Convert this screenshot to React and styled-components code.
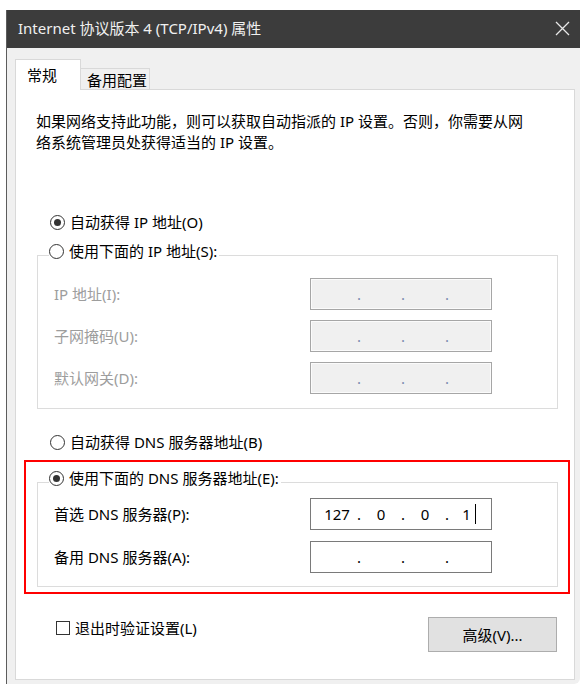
import React from 'react';
import styled, { createGlobalStyle } from 'styled-components';

const GlobalStyle = createGlobalStyle`
  html, body {
    margin: 0;
    padding: 0;
    background: #ffffff;
  }
  body {
    font-family: "Noto Sans", "Noto Sans CJK SC", sans-serif;
    font-size: 15px;
    color: #000;
  }
`;

const Window = styled.div`
  margin: 10px 0 0 6px;
  width: 574px;
  height: 674px;
  display: flex;
  flex-direction: column;
  background: #f0f0f0;
  border-left: 1px solid #5c5c5c;
  border-bottom-right-radius: 6px;
  box-sizing: border-box;
  overflow: hidden;
`;

const TitleBar = styled.div`
  height: 38px;
  flex: 0 0 38px;
  background: #3c3c3c;
  color: #f0f0f0;
  display: flex;
  align-items: center;
  justify-content: space-between;
  padding: 0 6px 2px 11px;
  box-sizing: border-box;
  font-size: 15px;
  line-height: 20px;
`;

const CloseButton = styled.div`
  width: 24px;
  height: 24px;
  display: flex;
  align-items: center;
  justify-content: center;
`;

const Body = styled.div`
  flex: 1;
  display: flex;
  flex-direction: column;
  padding: 12px 5px 4px 8px;
  min-height: 0;
`;

const TabBar = styled.div`
  display: flex;
  align-items: flex-end;
  height: 30px;
  position: relative;
  z-index: 1;
  margin-bottom: -1px;
`;

const Tab = styled.div`
  box-sizing: border-box;
  height: ${(p) => (p.$active ? '31px' : '22px')};
  padding: ${(p) => (p.$active ? '5px 0 0 11px' : '1px 0 0 6px')};
  width: ${(p) => p.$width}px;
  background: ${(p) => (p.$active ? '#ffffff' : '#f0f0f0')};
  border: 1px solid #d9d9d9;
  border-bottom: ${(p) => (p.$active ? 'none' : '1px solid #d9d9d9')};
  border-left: ${(p) => (p.$active ? '1px solid #d9d9d9' : 'none')};
  line-height: 20px;
`;

const Panel = styled.div`
  flex: 1;
  background: #ffffff;
  border: 1px solid #d9d9d9;
  display: flex;
  flex-direction: column;
`;

const Description = styled.p`
  margin: 21px 0 0 20px;
  line-height: 21px;
  width: 500px;
`;

const RadioRow = styled.label`
  display: flex;
  align-items: center;
  height: 20px;
  line-height: 20px;
  gap: 5px;
  margin: ${(p) => p.$margin || '0'};
  color: ${(p) => (p.$disabled ? '#9d9d9d' : '#000')};
  white-space: nowrap;
`;

const RadioCircle = styled.span`
  width: 15px;
  height: 15px;
  box-sizing: border-box;
  border: 1px solid #333333;
  border-radius: 50%;
  background: #ffffff;
  display: flex;
  align-items: center;
  justify-content: center;
  flex: 0 0 15px;

  &::after {
    content: '';
    width: 7px;
    height: 7px;
    border-radius: 50%;
    background: ${(p) => (p.$checked ? '#333333' : 'transparent')};
  }
`;

const CheckBox = styled.span`
  width: 14px;
  height: 14px;
  box-sizing: border-box;
  border: 1px solid #333333;
  background: #ffffff;
  flex: 0 0 14px;
`;

const Group = styled.fieldset`
  margin: ${(p) => p.$margin || '0'};
  padding: 0 0 ${(p) => p.$bottom}px 0;
  border: 1px solid #dcdcdc;
  min-width: 0;
`;

const Legend = styled.legend`
  margin-left: 11px;
  padding: 0 2px 8px 0;
  background: #ffffff;
`;

const Rows = styled.div`
  display: flex;
  flex-direction: column;
  gap: ${(p) => p.$gap}px;
  padding-top: ${(p) => p.$top}px;
`;

const FieldRow = styled.div`
  display: flex;
  align-items: center;
  height: 32px;
  padding-left: 16px;
`;

const FieldLabel = styled.span`
  flex: 0 0 256px;
  line-height: 20px;
  color: ${(p) => (p.$disabled ? '#9d9d9d' : '#000')};
`;

const IpBox = styled.div`
  width: 182px;
  height: 32px;
  box-sizing: border-box;
  display: flex;
  align-items: center;
  padding-left: 7px;
  background: ${(p) => (p.$disabled ? '#f0f0f0' : '#ffffff')};
  border: 1px solid ${(p) => (p.$disabled ? '#a6a6a6' : '#7a7a7a')};
  box-shadow: ${(p) => (p.$disabled ? 'inset 0 0 0 1px #fbfbfb' : 'none')};
  color: ${(p) => (p.$disabled ? '#8a8a8a' : '#000')};
  font-family: "Noto Sans", "Noto Sans CJK SC", sans-serif;
  font-size: 15px;
  line-height: 20px;
`;

const IpSegment = styled.span`
  width: 38px;
  text-align: center;
  display: flex;
  justify-content: center;
  align-items: center;
`;

const IpDot = styled.span`
  width: 6px;
  text-align: center;
  color: ${(p) => (p.$disabled ? '#7c8bb0' : '#000')};
`;

const Caret = styled.span`
  display: inline-block;
  width: 1px;
  height: 20px;
  background: #000;
  margin-left: 4px;
`;

const Highlight = styled.div`
  margin: 8px 4px 0 8px;
  border: 2px solid #ff0000;
  padding: 6px 10px 5px 11px;
`;

const Footer = styled.div`
  display: flex;
  justify-content: space-between;
  align-items: flex-start;
  margin-top: 23px;
  padding: 0 17px 0 40px;
`;

const CheckRow = styled.label`
  display: flex;
  align-items: center;
  gap: 5px;
  height: 20px;
  line-height: 20px;
  margin-top: 1px;
`;

const Button = styled.button`
  width: 129px;
  height: 35px;
  background: #e1e1e1;
  border: 1px solid #adadad;
  font-family: "Noto Sans", "Noto Sans CJK SC", sans-serif;
  font-size: 15px;
  color: #000;
  padding: 0;
`;

const IpField = ({ value, disabled, caret }) => {
  const parts = value || ['', '', '', ''];
  return (
    <IpBox $disabled={disabled}>
      {parts.map((part, i) => (
        <React.Fragment key={i}>
          <IpSegment>
            {part}
            {caret && i === 3 && <Caret />}
          </IpSegment>
          {i < 3 && <IpDot $disabled={disabled}>.</IpDot>}
        </React.Fragment>
      ))}
    </IpBox>
  );
};

const Radio = ({ checked, children, margin }) => (
  <RadioRow $margin={margin}>
    <RadioCircle $checked={checked} />
    {children}
  </RadioRow>
);

export default function App() {
  return (
    <>
      <GlobalStyle />
      <Window>
        <TitleBar>
          <span>Internet 协议版本 4 (TCP/IPv4) 属性</span>
          <CloseButton>
            <svg width="15" height="15" viewBox="0 0 15 15">
              <path d="M1 1 L14 14 M14 1 L1 14" stroke="#e8e8e8" strokeWidth="1.3" />
            </svg>
          </CloseButton>
        </TitleBar>
        <Body>
          <TabBar>
            <Tab $active $width={66}>常规</Tab>
            <Tab $width={69}>备用配置</Tab>
          </TabBar>
          <Panel>
            <Description>
              如果网络支持此功能，则可以获取自动指派的 IP 设置。否则，你需要从网络系统管理员处获得适当的 IP 设置。
            </Description>

            <Radio checked margin="59px 0 0 34px">自动获得 IP 地址(O)</Radio>

            <Group $margin="9px 16px 0 21px" $bottom={14}>
              <Legend>
                <Radio>使用下面的 IP 地址(S):</Radio>
              </Legend>
              <Rows $gap={10} $top={9}>
                <FieldRow>
                  <FieldLabel $disabled>IP 地址(I):</FieldLabel>
                  <IpField disabled />
                </FieldRow>
                <FieldRow>
                  <FieldLabel $disabled>子网掩码(U):</FieldLabel>
                  <IpField disabled />
                </FieldRow>
                <FieldRow>
                  <FieldLabel $disabled>默认网关(D):</FieldLabel>
                  <IpField disabled />
                </FieldRow>
              </Rows>
            </Group>

            <Radio margin="23px 0 0 34px">自动获得 DNS 服务器地址(B)</Radio>

            <Highlight>
              <Group $bottom={13}>
                <Legend>
                  <Radio checked>使用下面的 DNS 服务器地址(E):</Radio>
                </Legend>
                <Rows $gap={11} $top={2}>
                  <FieldRow>
                    <FieldLabel>首选 DNS 服务器(P):</FieldLabel>
                    <IpField value={['127', '0', '0', '1']} caret />
                  </FieldRow>
                  <FieldRow>
                    <FieldLabel>备用 DNS 服务器(A):</FieldLabel>
                    <IpField />
                  </FieldRow>
                </Rows>
              </Group>
            </Highlight>

            <Footer>
              <CheckRow>
                <CheckBox />
                退出时验证设置(L)
              </CheckRow>
              <Button>高级(V)...</Button>
            </Footer>
          </Panel>
        </Body>
      </Window>
    </>
  );
}
